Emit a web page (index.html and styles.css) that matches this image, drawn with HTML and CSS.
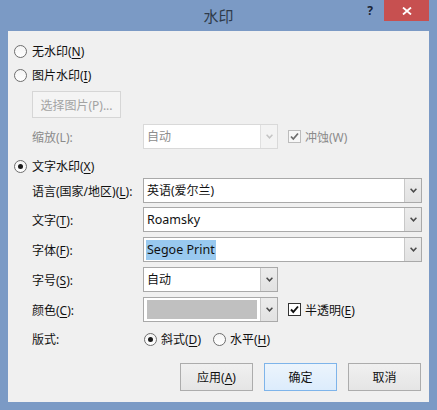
FILE: index.html
```html
<!DOCTYPE html>
<html lang="zh-CN">
<head>
<meta charset="utf-8">
<title>水印</title>
<link rel="stylesheet" href="styles.css">
</head>
<body>
<div class="window">
  <div class="titlebar">
    <div></div>
    <div class="title">水印</div>
    <div class="controls">
      <div class="help">?</div>
      <div class="close">
        <svg width="10" height="8" viewBox="0 0 10 8"><path d="M1 0.5 L9 7.5 M9 0.5 L1 7.5" stroke="#fff" stroke-width="1.8" fill="none"/></svg>
      </div>
    </div>
  </div>
  <div class="client">
    <div class="radio-row"><span class="radio"></span><span>无水印(<u>N</u>)</span></div>
    <div class="radio-row"><span class="radio"></span><span>图片水印(<u>I</u>)</span></div>
    <div class="btn-disabled">选择图片(P)...</div>
    <div class="form-row row-zoom">
      <span class="label disabled">缩放(L):</span>
      <div class="combo narrow disabled-combo">
        <div class="value">自动</div>
        <div class="arrow"><svg width="7" height="5" viewBox="0 0 7 5"><polyline points="0.6,0.8 3.5,3.8 6.4,0.8" fill="none" stroke="#c4c4c4" stroke-width="1.5"/></svg></div>
      </div>
      <span class="check disabled-check"><svg width="11" height="11" viewBox="0 0 11 11"><polyline points="2,5.5 4.3,8 9,2.5" fill="none" stroke="#6e6e6e" stroke-width="1.8"/></svg></span>
      <span class="check-text disabled">冲蚀(W)</span>
    </div>
    <div class="radio-row row-text"><span class="radio on"></span><span>文字水印(<u>X</u>)</span></div>
    <div class="form-row">
      <span class="label">语言(国家/地区)(<u>L</u>):</span>
      <div class="combo wide">
        <div class="value">英语(爱尔兰)</div>
        <div class="arrow"><svg width="7" height="5" viewBox="0 0 7 5"><polyline points="0.6,0.8 3.5,3.8 6.4,0.8" fill="none" stroke="#4a4a4a" stroke-width="1.5"/></svg></div>
      </div>
    </div>
    <div class="form-row gap4">
      <span class="label">文字(<u>T</u>):</span>
      <div class="combo wide">
        <div class="value latin">Roamsky</div>
        <div class="arrow"><svg width="7" height="5" viewBox="0 0 7 5"><polyline points="0.6,0.8 3.5,3.8 6.4,0.8" fill="none" stroke="#4a4a4a" stroke-width="1.5"/></svg></div>
      </div>
    </div>
    <div class="form-row gap5">
      <span class="label">字体(<u>F</u>):</span>
      <div class="combo wide">
        <div class="value latin"><span class="selected">Segoe Print</span></div>
        <div class="arrow"><svg width="7" height="5" viewBox="0 0 7 5"><polyline points="0.6,0.8 3.5,3.8 6.4,0.8" fill="none" stroke="#4a4a4a" stroke-width="1.5"/></svg></div>
      </div>
    </div>
    <div class="form-row gap5">
      <span class="label">字号(<u>S</u>):</span>
      <div class="combo narrow">
        <div class="value">自动</div>
        <div class="arrow"><svg width="7" height="5" viewBox="0 0 7 5"><polyline points="0.6,0.8 3.5,3.8 6.4,0.8" fill="none" stroke="#4a4a4a" stroke-width="1.5"/></svg></div>
      </div>
    </div>
    <div class="form-row gap5">
      <span class="label">颜色(<u>C</u>):</span>
      <div class="combo narrow">
        <div class="swatch-wrap"><div class="swatch"></div></div>
        <div class="arrow"><svg width="7" height="5" viewBox="0 0 7 5"><polyline points="0.6,0.8 3.5,3.8 6.4,0.8" fill="none" stroke="#4a4a4a" stroke-width="1.5"/></svg></div>
      </div>
      <span class="check"><svg width="11" height="11" viewBox="0 0 11 11"><polyline points="2,5.5 4.3,8 9,2.5" fill="none" stroke="#111" stroke-width="1.9"/></svg></span>
      <span class="check-text">半透明(<u>E</u>)</span>
    </div>
    <div class="form-row layout-row">
      <span class="label">版式:</span>
      <span class="opt first"><span class="radio on"></span><span>斜式(<u>D</u>)</span></span>
      <span class="opt second"><span class="radio"></span><span>水平(<u>H</u>)</span></span>
    </div>
    <div class="buttons">
      <div class="btn">应用(<u>A</u>)</div>
      <div class="btn default">确定</div>
      <div class="btn">取消</div>
    </div>
  </div>
</div>
</body>
</html>
```

FILE: styles.css
```css
body {
  margin: 0;
  font-family: "Noto Sans", "Noto Sans CJK SC", sans-serif;
  font-size: 12px;
  color: #111;
}

u {
  text-decoration: underline;
  text-underline-offset: 2px;
}

.window {
  width: 437px;
  height: 410px;
  background: #7b9ac5;
  display: flex;
  flex-direction: column;
}

.titlebar {
  height: 31px;
  flex: none;
  display: grid;
  grid-template-columns: 1fr auto 1fr;
}

.title {
  align-self: center;
  font-size: 15px;
  line-height: 20px;
  color: #2f3a4a;
  font-family: "Noto Sans CJK SC", sans-serif;
}

.controls {
  display: flex;
  justify-content: flex-end;
  align-items: flex-start;
  padding-right: 8px;
}

.help {
  font-family: "Noto Sans", sans-serif;
  font-weight: bold;
  font-size: 12px;
  line-height: 14px;
  margin-top: 4px;
  margin-right: 11px;
  color: #1b2535;
}

.close {
  width: 45px;
  height: 21px;
  background: #c75050;
  display: flex;
  align-items: center;
  justify-content: center;
}

.client {
  margin: 0 8px;
  height: 371px;
  background: #f0f0f0;
  padding-top: 8px;
  box-sizing: border-box;
}

.radio-row {
  height: 24px;
  display: flex;
  align-items: center;
  padding-left: 6px;
  gap: 5px;
}

.row-text {
  margin-top: 5px;
}

.radio {
  width: 13px;
  height: 13px;
  box-sizing: border-box;
  border: 1px solid #6e6e6e;
  border-radius: 50%;
  background: linear-gradient(#f4f4f4, #ffffff);
  display: flex;
  align-items: center;
  justify-content: center;
  flex: none;
}

.radio.on::after {
  content: "";
  width: 5px;
  height: 5px;
  border-radius: 50%;
  background: #1a1a1a;
}

.btn-disabled {
  margin: 4px 0 0 24px;
  width: 89px;
  height: 27px;
  box-sizing: border-box;
  border: 1px solid #d6d6d6;
  background: #f4f4f4;
  color: #a3a3a3;
  display: flex;
  align-items: center;
  justify-content: center;
}

.form-row {
  display: flex;
  align-items: center;
  height: 25px;
  padding-left: 24px;
}

.row-zoom {
  margin-top: 6px;
}

.gap4 {
  margin-top: 4px;
}

.gap5 {
  margin-top: 5px;
}

.label {
  width: 111px;
  flex: none;
  white-space: nowrap;
}

.disabled {
  color: #8b8b8b;
}

.combo {
  box-sizing: border-box;
  height: 25px;
  border: 1px solid #a9a9a9;
  background: #fff;
  display: flex;
  flex: none;
}

.combo.wide {
  width: 279px;
}

.combo.narrow {
  width: 135px;
}

.combo .value {
  flex: 1;
  padding-left: 3px;
  line-height: 23px;
  white-space: nowrap;
  overflow: hidden;
}

.combo .value.latin {
  font-size: 12.5px;
}

.combo .arrow {
  width: 17px;
  flex: none;
  box-sizing: border-box;
  border-left: 1px solid #c8c8c8;
  background: linear-gradient(#ececec, #e2e2e2);
  display: flex;
  align-items: center;
  justify-content: center;
}

.disabled-combo {
  border-color: #d9d9d9;
}

.disabled-combo .value {
  color: #8d8d8d;
}

.disabled-combo .arrow {
  border-left-color: #e0e0e0;
  background: #f3f3f3;
}

.selected {
  display: inline-block;
  background: #99c9ef;
  padding: 0 1px;
  line-height: 20px;
  margin-left: -1px;
}

.swatch-wrap {
  flex: 1;
  padding: 2px 3px;
  display: flex;
}

.swatch {
  flex: 1;
  background: #c0c0c0;
}

.check {
  width: 13px;
  height: 13px;
  box-sizing: border-box;
  border: 1px solid #333;
  background: #fff;
  margin-left: 10px;
  display: flex;
  align-items: center;
  justify-content: center;
  flex: none;
}

.disabled-check {
  border-color: #bcbcbc;
  background: #f7f7f7;
}

.check-text {
  margin-left: 4px;
  white-space: nowrap;
}

.layout-row {
  height: 24px;
  margin-top: 5px;
}

.opt {
  display: flex;
  align-items: center;
  gap: 4px;
}

.opt.first {
  margin-left: 1px;
}

.opt.second {
  margin-left: 12px;
}

.buttons {
  margin-top: 12px;
  display: flex;
  justify-content: flex-end;
  gap: 11px;
  padding-right: 8px;
}

.btn {
  width: 73px;
  height: 28px;
  box-sizing: border-box;
  border: 1px solid #acacac;
  background: linear-gradient(#f0f0f0, #e5e5e5);
  display: flex;
  align-items: center;
  justify-content: center;
}

.btn.default {
  border-color: #7eb4ea;
  background: linear-gradient(#ecf4fc, #dcecfc);
}
```
